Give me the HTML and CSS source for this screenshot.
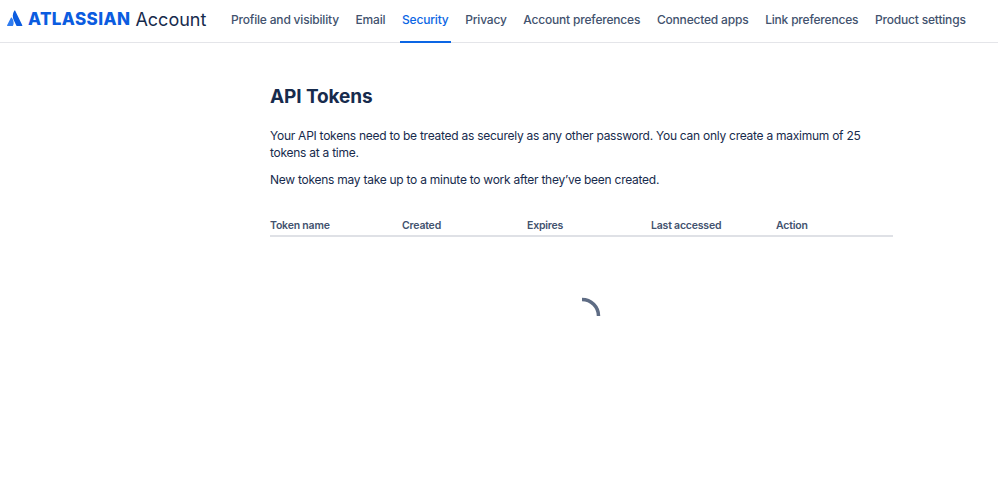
FILE: index.html
```html
<!DOCTYPE html>
<html lang="en">
<head>
    <meta charset="UTF-8">
    <meta name="viewport" content="width=device-width, initial-scale=1.0">
    <title>API Tokens - Atlassian Account</title>
    <link rel="stylesheet" href="styles.css">
</head>
<body>
    <header class="top-bar">
        <a class="logo" href="#">
            <svg class="logo-mark" width="16" height="16" viewBox="0 0 16 16" aria-hidden="true">
                <path d="M4.6 7.6c-.2-.3-.6-.2-.7.1L.1 15.2c-.2.3.1.7.4.7h5.2c.2 0 .3-.1.4-.3 1.100-2.300.5-5.800-1.500-8z" fill="#2f7cf0"/>
                <path d="M7.400.6C5.300 3.900 5.400 7.500 6.800 10.300l2.500 5.300c.1.200.200.300.400.300h5.200c.300 0 .600-.400.400-.700L8.100.6c-.200-.300-.600-.300-.700 0z" fill="#0b5ce0"/>
            </svg>
            <span class="logo-brand">ATLASSIAN</span>
            <span class="logo-product">Account</span>
        </a>
        <nav class="tabs">
            <a href="#">Profile and visibility</a>
            <a href="#">Email</a>
            <a href="#" class="active">Security</a>
            <a href="#">Privacy</a>
            <a href="#">Account preferences</a>
            <a href="#">Connected apps</a>
            <a href="#">Link preferences</a>
            <a href="#">Product settings</a>
        </nav>
    </header>

    <main class="content">
        <h1>API Tokens</h1>
        <p class="intro">Your API tokens need to be treated as securely as any other password. You can only create a maximum of 25 tokens at a time.</p>
        <p class="note">New tokens may take up to a minute to work after they’ve been created.</p>

        <div class="token-head">
            <span>Token name</span>
            <span>Created</span>
            <span>Expires</span>
            <span>Last accessed</span>
            <span>Action</span>
        </div>

        <div class="loading">
            <svg width="40" height="40" viewBox="0 0 40 40" aria-hidden="true">
                <path d="M20 3.500A16.500 16.500 0 0 1 36.500 20" fill="none" stroke="#5e6c84" stroke-width="3.500"/>
            </svg>
        </div>
    </main>
</body>
</html>
```
FILE: styles.css
```css
body {
    font-family: Inter, 'Liberation Sans', sans-serif;
    background: white;
    color: #172b4d;
    margin: 0;
    padding: 0;
}

a {
    text-decoration: none;
}

.top-bar {
    display: flex;
    align-items: stretch;
    height: 42px;
    padding-left: 7px;
    border-bottom: 1px solid #e4e5e9;
}

.logo {
    display: flex;
    align-items: center;
    width: 222px;
    margin-bottom: 4px;
    flex-shrink: 0;
}

.logo-mark {
    margin-right: 5px;
    margin-bottom: 2px;
}

.logo-brand {
    color: #0b5ce0;
    font-size: 17px;
    font-weight: 800;
    letter-spacing: 0.4px;
    margin-right: 5px;
}

.logo-product {
    color: #172b4d;
    font-size: 18px;
    font-weight: 400;
}

.tabs {
    display: flex;
    gap: 12.700px;
    height: 43px;
}

.tabs a {
    display: flex;
    align-items: center;
    padding: 0 2px 5px;
    color: #42526e;
    font-size: 12px;
    letter-spacing: -0.19px;
    font-weight: 500;
    white-space: nowrap;
    box-sizing: border-box;
}

.tabs a.active {
    color: #0c66e4;
    border-bottom: 2px solid #0c66e4;
    padding-bottom: 3px;
}

.content {
    width: 623px;
    margin-left: 270px;
}

h1 {
    margin: 42px 0 0;
    font-size: 19px;
    letter-spacing: -0.1px;
    line-height: 24px;
    font-weight: 700;
    color: #172b4d;
}

.intro, .note {
    font-size: 12px;
    letter-spacing: -0.26px;
    line-height: 17px;
    margin: 0;
    color: #172b4d;
}

.intro {
    margin-top: 18px;
}

.note {
    margin-top: 10px;
}

.token-head {
    display: grid;
    grid-template-columns: 132px 125px 124px 125px 1fr;
    margin-top: 31px;
    padding-bottom: 2px;
    border-bottom: 2px solid #dfe1e6;
    color: #42526e;
    font-size: 10.500px;
    letter-spacing: -0.2px;
    line-height: 14px;
    font-weight: 600;
}

.loading {
    display: flex;
    justify-content: center;
    padding-top: 59px;
}
```
